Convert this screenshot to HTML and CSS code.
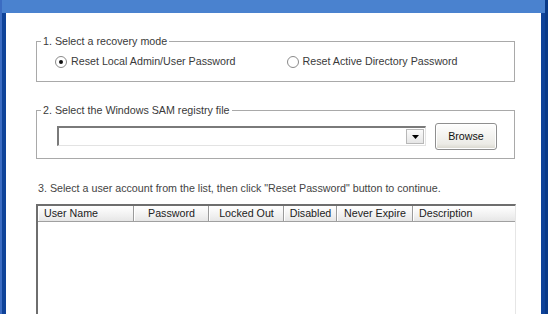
FILE: index.html
```html
<!DOCTYPE html>
<html lang="en-us">
  <head>
    <meta charset="utf-8">
    <title>Password Recovery</title>

    <link rel="stylesheet" href="styles.css">
  </head>
  <body>
    <div class="window">
      <div class="titlebar"></div>
      <main class="content">

        <fieldset class="group">
          <legend>1. Select a recovery mode</legend>
          <div class="radioRow">
            <label class="radio"><span class="dot checked"></span>Reset Local Admin/User Password</label>
            <label class="radio second"><span class="dot"></span>Reset Active Directory Password</label>
          </div>
        </fieldset>

        <fieldset class="group groupTwo">
          <legend>2. Select the Windows SAM registry file</legend>
          <div class="fileRow">
            <div class="combo">
              <span class="comboText"></span>
              <span class="comboArrow">
                <svg width="7" height="4" viewBox="0 0 7 4"><path d="M0 0h7L3.5 4z" fill="#000"/></svg>
              </span>
            </div>
            <button class="browse">Browse</button>
          </div>
        </fieldset>

        <p class="hint">3. Select a user account from the list, then click "Reset Password" button to continue.</p>

        <div class="list">
          <div class="listHead">
            <span class="col colUser">User Name</span>
            <span class="col colPass center">Password</span>
            <span class="col colLock center">Locked Out</span>
            <span class="col colDis center">Disabled</span>
            <span class="col colNever center">Never Expire</span>
            <span class="col colDesc">Description</span>
          </div>
          <div class="listBody"></div>
        </div>

      </main>
    </div>
  </body>
</html>
```

FILE: styles.css
```css
html, body {
  margin: 0;
  height: 100%;
  overflow: hidden;
}

body {
  font-family: "Liberation Sans", Arial, sans-serif;
  font-size: 10.7px;
  color: #3a3a3a;
  background: #0c3d8e;
}

.window {
  height: 100%;
  box-sizing: border-box;
  border-left: 2px solid #3b6cc2;
  border-right: 3px solid #0a3a88;
  padding: 0 4px;
  background: #0f4399;
  display: flex;
  flex-direction: column;
}

.titlebar {
  flex-shrink: 0;
  height: 13px;
  margin: 0 -4px;
  background: #4a82cf;
}

.content {
  flex: 1;
  min-height: 0;
  overflow: hidden;
  background: #ffffff;
  padding: 22px 0 0 30px;
}

.group {
  width: 477px;
  margin: 0;
  padding: 7px 0 13px 0;
  border: 1px solid #a9a9a9;
}

.group legend {
  margin-left: 4px;
  padding: 0 2px;
  line-height: 13px;
}

.radioRow {
  display: flex;
  height: 13px;
  align-items: center;
}

.radio {
  display: flex;
  align-items: center;
  padding-left: 18px;
  line-height: 13px;
}

.radio.second {
  padding-left: 51px;
}

.dot {
  width: 10px;
  height: 10px;
  border: 1px solid #8a8a8a;
  border-radius: 50%;
  margin-right: 4px;
  background: #ffffff;
  position: relative;
}

.dot.checked::after {
  content: "";
  position: absolute;
  left: 3px;
  top: 3px;
  width: 4px;
  height: 4px;
  border-radius: 50%;
  background: #111111;
}

.groupTwo {
  margin-top: 22px;
  padding: 6px 0 9px 0;
}

.fileRow {
  display: flex;
  align-items: center;
  height: 26px;
  padding-left: 20px;
}

.combo {
  width: 366px;
  height: 17px;
  display: flex;
  border-top: 2px solid #7a7a7a;
  border-left: 2px solid #7a7a7a;
  border-right: 1px solid #e3e3e3;
  border-bottom: 1px solid #e3e3e3;
  background: #ffffff;
}

.comboText {
  flex: 1;
}

.comboArrow {
  width: 16px;
  margin: 1px 1px 1px 0;
  background: linear-gradient(#fbfbfb, #e6e6e6);
  border: 1px solid #b8b8b8;
  display: flex;
  align-items: center;
  justify-content: center;
}

.browse {
  margin-left: 9px;
  width: 62px;
  height: 27px;
  font-family: "Liberation Sans", Arial, sans-serif;
  font-size: 10.7px;
  color: #111111;
  border: 1px solid #8f8f8f;
  border-radius: 3px;
  background: linear-gradient(#fefefe, #ecebe6 80%, #d8d6cc);
  box-shadow: inset 0 0 0 1px #ffffff;
  padding: 0;
}

.hint {
  margin: 23px 0 0 2px;
  line-height: 13px;
  color: #444444;
}

.list {
  margin-top: 9px;
  width: 477px;
  height: 160px;
  border-left: 2px solid #6e6e6e;
  border-top: 2px solid #6e6e6e;
  border-right: 1px solid #e6e6e6;
  background: #ffffff;
}

.listHead {
  display: flex;
  height: 15px;
  background: linear-gradient(#ffffff, #f1f1f1 60%, #e6e6e6);
  border-bottom: 1px solid #a0a0a0;
}

.col {
  box-sizing: border-box;
  line-height: 15px;
  padding-left: 5px;
  border-right: 1px solid #9a9a9a;
  border-left: 1px solid #ffffff;
  white-space: nowrap;
  color: #222222;
}

.col.center {
  text-align: center;
  padding-left: 0;
}

.colUser { width: 96px; }
.colPass { width: 75px; }
.colLock { width: 75px; }
.colDis { width: 53px; }
.colNever { width: 76px; }
.colDesc { flex: 1; border-right: none; }
```
